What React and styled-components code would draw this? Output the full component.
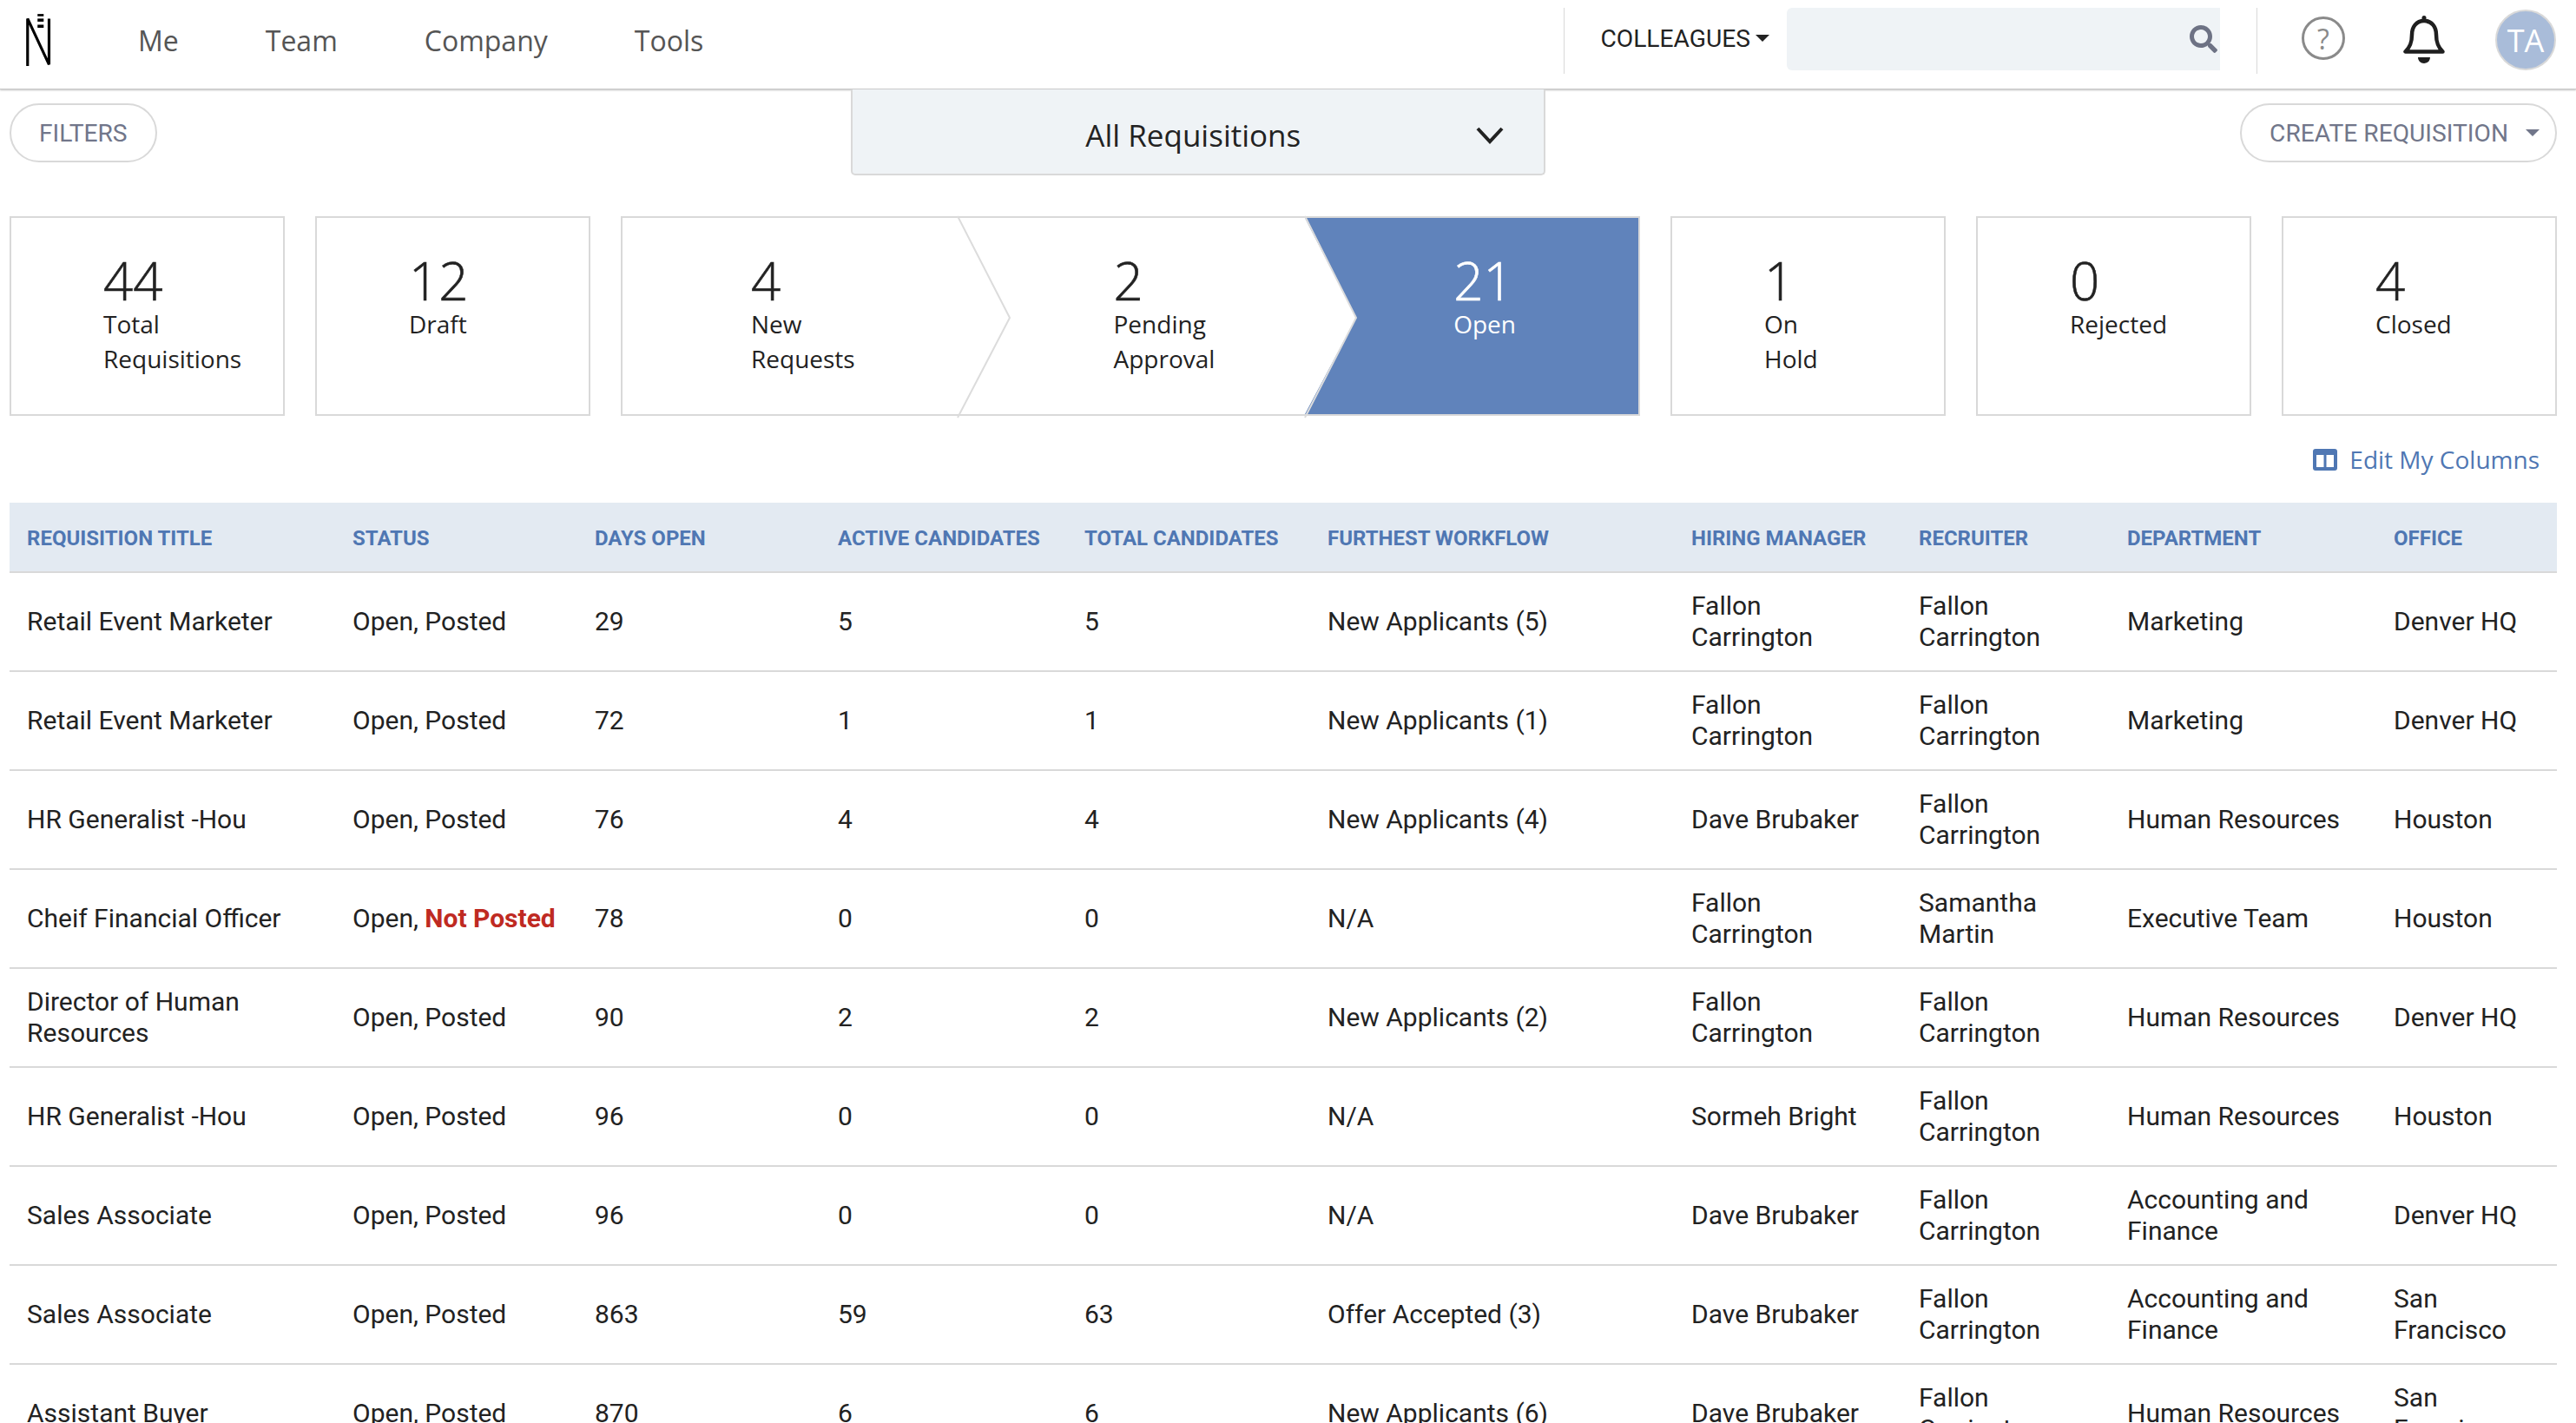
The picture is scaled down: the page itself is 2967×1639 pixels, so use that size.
import styled, { createGlobalStyle } from "styled-components";
import { FaSearch } from "react-icons/fa";

const BLUE = "#4f77b3";

const rows = [
  ["Retail Event Marketer", "Posted", "29", "5", "5", "New Applicants (5)", "Fallon Carrington", "Fallon Carrington", "Marketing", "Denver HQ"],
  ["Retail Event Marketer", "Posted", "72", "1", "1", "New Applicants (1)", "Fallon Carrington", "Fallon Carrington", "Marketing", "Denver HQ"],
  ["HR Generalist -Hou", "Posted", "76", "4", "4", "New Applicants (4)", "Dave Brubaker", "Fallon Carrington", "Human Resources", "Houston"],
  ["Cheif Financial Officer", "Not Posted", "78", "0", "0", "N/A", "Fallon Carrington", "Samantha Martin", "Executive Team", "Houston"],
  ["Director of Human Resources", "Posted", "90", "2", "2", "New Applicants (2)", "Fallon Carrington", "Fallon Carrington", "Human Resources", "Denver HQ"],
  ["HR Generalist -Hou", "Posted", "96", "0", "0", "N/A", "Sormeh Bright", "Fallon Carrington", "Human Resources", "Houston"],
  ["Sales Associate", "Posted", "96", "0", "0", "N/A", "Dave Brubaker", "Fallon Carrington", "Accounting and Finance", "Denver HQ"],
  ["Sales Associate", "Posted", "863", "59", "63", "Offer Accepted (3)", "Dave Brubaker", "Fallon Carrington", "Accounting and Finance", "San Francisco"],
  ["Assistant Buyer", "Posted", "870", "6", "6", "New Applicants (6)", "Dave Brubaker", "Fallon Carrington", "Human Resources", "San Francisco"],
];

const columns = [
  ["REQUISITION TITLE", 375],
  ["STATUS", 279],
  ["DAYS OPEN", 280],
  ["ACTIVE CANDIDATES", 284],
  ["TOTAL CANDIDATES", 280],
  ["FURTHEST WORKFLOW", 419],
  ["HIRING MANAGER", 262],
  ["RECRUITER", 240],
  ["DEPARTMENT", 307],
  ["OFFICE", 208],
];

const GlobalStyle = createGlobalStyle`
  html, body {
    margin: 0;
    height: 100%;
    overflow: hidden;
    background: #fff;
  }
  body {
    font-family: "Roboto", "Liberation Sans", sans-serif;
    color: #222;
  }
`;

const Logo = () => (
  <LogoSvg viewBox="0 0 34 70" aria-label="logo">
    <path d="M2 68V6l28 60V6" fill="none" stroke="#000" strokeWidth="3.6" />
    <rect x="15" y="0" width="8" height="3" fill="#000" />
    <rect x="15" y="6" width="8" height="4" fill="#000" />
    <rect x="15" y="14" width="8" height="4" fill="#000" />
  </LogoSvg>
);

const Bell = () => (
  <BellSvg viewBox="0 0 48 55">
    <path
      d="M24 6C15 6 10 13 10 22c0 9-2 14-7.500 19.500h43C40 36 38 31 38 22 38 13 33 6 24 6z"
      fill="none"
      stroke="#1f1f1f"
      strokeWidth="4.500"
      strokeLinejoin="round"
    />
    <rect x="21.500" y="0" width="5" height="8" rx="2.500" fill="#1f1f1f" />
    <path d="M17 48h14c0 4-3 7-7 7s-7-3-7-7z" fill="#1f1f1f" />
  </BellSvg>
);

const Funnel = () => (
  <FunnelSvg viewBox="0 0 1174 230">
    <polygon points="788,2 847,117 788,228 1172,228 1172,2" fill="#6083bb" />
    <polyline points="388,0 448,117 388,232" fill="none" stroke="#dcdcdc" strokeWidth="2" />
    <polyline points="788,0 847,117 788,232" fill="none" stroke="#dcdcdc" strokeWidth="2" />
  </FunnelSvg>
);

const Stat = ({ value, label, inverted }) => (
  <>
    <Value $inverted={inverted}>{value}</Value>
    <Label $inverted={inverted}>{label}</Label>
  </>
);

export default function App() {
  return (
    <>
      <GlobalStyle />
      <Nav>
        <LogoLink><Logo /></LogoLink>
        <NavLinks>
          <NavLink>Me</NavLink>
          <NavLink>Team</NavLink>
          <NavLink>Company</NavLink>
          <NavLink>Tools</NavLink>
        </NavLinks>
        <NavRight>
          <Divider />
          <Colleagues>COLLEAGUES<SmallCaret $color="#222" /></Colleagues>
          <SearchBox>
            <FaSearch size={32} color="#6d7284" />
          </SearchBox>
          <Divider $right />
          <HelpIcon>?</HelpIcon>
          <Bell />
          <Avatar>TA</Avatar>
        </NavRight>
      </Nav>

      <Toolbar>
        <Pill>FILTERS</Pill>
        <ReqSelect>
          All Requisitions
          <Chevron viewBox="0 0 32 20">
            <path d="M2 2l14 15L30 2" fill="none" stroke="#222" strokeWidth="4" />
          </Chevron>
        </ReqSelect>
        <Pill $tight>CREATE REQUISITION<SmallCaret $color="#71768a" $gap={20} /></Pill>
      </Toolbar>

      <Stats>
        <Card><Stat value="44" label={<>Total<br />Requisitions</>} /></Card>
        <Card><Stat value="12" label="Draft" /></Card>
        <FunnelCard>
          <Funnel />
          <Segment $width={419}><Stat value="4" label={<>New<br />Requests</>} /></Segment>
          <Segment $width={393}><Stat value="2" label={<>Pending<br />Approval</>} /></Segment>
          <Segment $width={362}><Stat value="21" label="Open" inverted /></Segment>
        </FunnelCard>
        <Card><Stat value="1" label={<>On<br />Hold</>} /></Card>
        <Card><Stat value="0" label="Rejected" /></Card>
        <Card><Stat value="4" label="Closed" /></Card>
      </Stats>

      <EditRow>
        <EditLink>
          <ColumnsIcon viewBox="0 0 28 25">
            <rect width="28" height="25" rx="3" fill={BLUE} />
            <rect x="4" y="7" width="8.500" height="14" fill="#fff" />
            <rect x="15.500" y="7" width="8.500" height="14" fill="#fff" />
          </ColumnsIcon>
          Edit My Columns
        </EditLink>
      </EditRow>

      <Table>
        <colgroup>
          {columns.map(([name, width]) => <col key={name} width={width} />)}
        </colgroup>
        <thead>
          <tr>
            {columns.map(([name]) => <Th key={name}>{name}</Th>)}
          </tr>
        </thead>
        <tbody>
          {rows.map((row, i) => (
            <tr key={i}>
              {row.map((cell, j) => (
                <Td key={j} $nowrap={j === 1}>
                  {j === 1 ? (
                    <>Open, {cell === "Posted" ? cell : <NotPosted>{cell}</NotPosted>}</>
                  ) : cell}
                </Td>
              ))}
            </tr>
          ))}
        </tbody>
      </Table>
    </>
  );
}

const Nav = styled.header`
  display: flex;
  align-items: center;
  height: 102px;
  border-bottom: 1px solid #c9c9c9;
  box-shadow: 0 1px 2px rgba(0, 0, 0, 0.25);
  padding: 0 23px 0 0;
  position: relative;
  background: #fff;
`;

const LogoLink = styled.a`
  display: flex;
  padding-left: 30px;
  margin-top: -9px;
`;

const LogoSvg = styled.svg`
  width: 30px;
  height: 68px;
`;

const NavLinks = styled.nav`
  display: flex;
  gap: 100px;
  margin: 0 0 10px 99px;
`;

const NavLink = styled.a`
  font-family: "Open Sans", sans-serif;
  font-size: 32px;
  color: #555;
`;

const NavRight = styled.div`
  display: flex;
  align-items: center;
  margin-left: auto;
  height: 100%;
`;

const Divider = styled.div`
  width: 1px;
  height: 76px;
  background: #d9d9d9;
  margin-top: -8px;
  margin-left: ${p => (p.$right ? "42px" : "0")};
`;

const Colleagues = styled.div`
  display: flex;
  align-items: center;
  font-size: 28.200px;
  color: #222;
  margin-left: 41px;
  margin-bottom: 14px;
`;

const SmallCaret = styled.span`
  display: inline-block;
  margin-left: ${p => p.$gap || 6}px;
  border-left: 8px solid transparent;
  border-right: 8px solid transparent;
  border-top: 8px solid ${p => p.$color};
`;

const SearchBox = styled.div`
  display: flex;
  align-items: center;
  justify-content: flex-end;
  box-sizing: border-box;
  width: 499px;
  height: 72px;
  margin: -12px 0 0 20px;
  padding-right: 3px;
  background: #eff3f6;
  border-radius: 6px 0 0 6px;
`;

const HelpIcon = styled.div`
  display: flex;
  align-items: center;
  justify-content: center;
  box-sizing: border-box;
  width: 50px;
  height: 50px;
  margin: -14px 0 0 51px;
  border: 3px solid #8a8a8a;
  border-radius: 50%;
  font-family: "Open Sans", sans-serif;
  font-size: 32px;
  color: #8a8a8a;
`;

const BellSvg = styled.svg`
  width: 48px;
  height: 55px;
  margin: -11px 0 0 67px;
`;

const Avatar = styled.div`
  display: flex;
  align-items: center;
  justify-content: center;
  box-sizing: border-box;
  width: 70px;
  height: 70px;
  margin: -10px 0 0 58px;
  border: 2px solid #d9d9d9;
  border-radius: 50%;
  background: #a9bcd9;
  font-family: "Open Sans", sans-serif;
  font-size: 36px;
  color: #fff;
`;

const Toolbar = styled.div`
  display: flex;
  justify-content: space-between;
  align-items: flex-start;
  padding: 0 22px 0 11px;
`;

const Pill = styled.button`
  display: flex;
  align-items: center;
  height: 68px;
  margin-top: 16px;
  padding: 0 ${p => (p.$tight ? "18px" : "32px")} 0 32px;
  background: #fff;
  border: 2px solid #d9d9d9;
  border-radius: 34px;
  font-family: "Roboto", sans-serif;
  font-size: 28.200px;
  color: #71768a;
`;

const ReqSelect = styled.div`
  position: relative;
  display: flex;
  align-items: center;
  justify-content: space-between;
  box-sizing: border-box;
  width: 800px;
  height: 99px;
  padding: 8px 46px 0 268px;
  background: #eff3f6;
  border: 2px solid #d9d9d9;
  border-top: none;
  border-radius: 0 0 5px 5px;
  font-family: "Open Sans", sans-serif;
  font-size: 35px;
  color: #222;
`;

const Chevron = styled.svg`
  width: 32px;
  height: 20px;
`;

const Stats = styled.section`
  display: flex;
  gap: 35px;
  margin: 47px 22px 0 11px;
`;

const Card = styled.div`
  box-sizing: border-box;
  width: 317px;
  height: 230px;
  padding: 43px 0 0 106px;
  border: 2px solid #d9d9d9;
`;

const FunnelCard = styled.div`
  position: relative;
  box-sizing: border-box;
  display: flex;
  width: 1174px;
  height: 230px;
  border: 2px solid #d9d9d9;
`;

const FunnelSvg = styled.svg`
  position: absolute;
  inset: -2px;
  width: 1174px;
  height: 230px;
  overflow: visible;
`;

const Segment = styled.div`
  position: relative;
  box-sizing: border-box;
  width: ${p => p.$width}px;
  padding: 43px 0 0 148px;
`;

const Value = styled.div`
  font-family: "Open Sans", sans-serif;
  font-weight: 300;
  font-size: 60px;
  line-height: 59px;
  -webkit-text-stroke: 0.6px ${p => (p.$inverted ? "#fff" : "#222")};
  color: ${p => (p.$inverted ? "#fff" : "#222")};
`;

const Label = styled.div`
  font-family: "Open Sans", sans-serif;
  font-size: 28px;
  line-height: 40px;
  color: ${p => (p.$inverted ? "#fff" : "#222")};
`;

const EditRow = styled.div`
  display: flex;
  justify-content: flex-end;
  align-items: center;
  height: 100px;
  padding-right: 42px;
`;

const EditLink = styled.a`
  display: flex;
  align-items: center;
  gap: 14px;
  font-family: "Open Sans", sans-serif;
  font-size: 28px;
  color: ${BLUE};
`;

const ColumnsIcon = styled.svg`
  width: 28px;
  height: 25px;
`;

const Table = styled.table`
  table-layout: fixed;
  width: 2934px;
  margin-left: 11px;
  border-collapse: separate;
  border-spacing: 0;
`;

const Th = styled.th`
  box-sizing: border-box;
  height: 81px;
  padding: 2px 0 0 20px;
  background: #e3eaf2;
  border-bottom: 2px solid #d9d9d9;
  text-align: left;
  font-size: 24px;
  font-weight: 700;
  white-space: nowrap;
  color: ${BLUE};
`;

const Td = styled.td`
  box-sizing: border-box;
  height: 114px;
  padding: 0 40px 0 20px;
  border-bottom: 2px solid #d9d9d9;
  font-size: 30px;
  line-height: 36px;
  color: #222;
  white-space: ${p => (p.$nowrap ? "nowrap" : "normal")};

  &:last-child {
    padding-right: 20px;
  }
`;

const NotPosted = styled.span`
  font-weight: 700;
  color: #bf2a22;
`;
